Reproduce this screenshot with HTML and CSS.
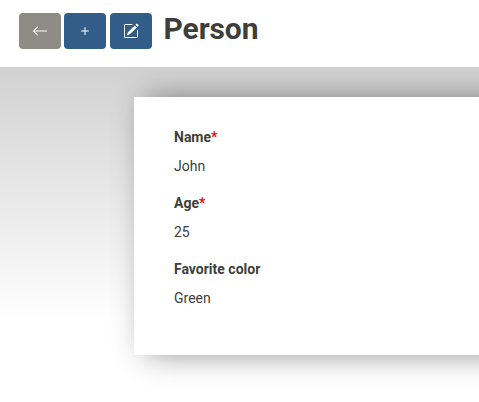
FILE: index.html
```html
<!DOCTYPE html>
<html lang="en">
<head>
<meta charset="utf-8">
<title>Person</title>
<link rel="stylesheet" href="styles.css">
</head>
<body>
<header class="toolbar">
  <button class="btn btn-back" aria-label="Back"><svg width="16" height="16" viewBox="0 0 16 16" fill="currentColor"><path fill-rule="evenodd" d="M15 8a.5.5 0 0 0-.5-.5H2.707l3.147-3.146a.5.5 0 1 0-.708-.708l-4 4a.5.5 0 0 0 0 .708l4 4a.5.5 0 0 0 .708-.708L2.707 8.5H14.5A.5.5 0 0 0 15 8z"/></svg></button>
  <button class="btn" aria-label="Add"><svg width="16" height="16" viewBox="0 0 16 16" fill="currentColor"><path d="M8 4a.5.5 0 0 1 .5.5v3h3a.5.5 0 0 1 0 1h-3v3a.5.5 0 0 1-1 0v-3h-3a.5.5 0 0 1 0-1h3v-3A.5.5 0 0 1 8 4z"/></svg></button>
  <button class="btn btn-edit" aria-label="Edit"><svg width="16" height="16" viewBox="0 0 16 16" fill="currentColor"><path d="M15.502 1.94a.5.5 0 0 1 0 .706L14.459 3.69l-2-2L13.502.646a.5.5 0 0 1 .707 0l1.293 1.293zm-1.75 2.456-2-2L4.939 9.21a.5.5 0 0 0-.121.196l-.805 2.414a.25.25 0 0 0 .316.316l2.414-.805a.5.5 0 0 0 .196-.12l6.813-6.814z"/><path fill-rule="evenodd" d="M1 13.5A1.5 1.5 0 0 0 2.500 15h11a1.500 1.500 0 0 0 1.500-1.500v-6a.5.5 0 0 0-1 0v6a.5.5 0 0 1-.5.5h-11a.5.5 0 0 1-.5-.5v-11a.5.5 0 0 1 .5-.5H9a.5.5 0 0 0 0-1H2.500A1.500 1.500 0 0 0 1 2.500v11z"/></svg></button>
  <h1 class="title">Person</h1>
</header>
<main class="content">
  <dl class="card">
    <dt class="label">Name<span class="required">*</span></dt>
    <dd class="value">John</dd>
    <dt class="label">Age<span class="required">*</span></dt>
    <dd class="value">25</dd>
    <dt class="label">Favorite color</dt>
    <dd class="value">Green</dd>
  </dl>
</main>
</body>
</html>
```
FILE: styles.css
```css
* { box-sizing: border-box; }
body {
  margin: 0;
  height: 402px;
  overflow: hidden;
  background: #fff;
  color: #3e3f3a;
  font: 14px/20px Roboto, sans-serif;
}
.toolbar {
  display: flex;
  align-items: flex-start;
  gap: 3px;
  height: 67px;
  padding: 13px 0 0 19px;
}
.btn {
  display: flex;
  align-items: center;
  justify-content: center;
  width: 42px;
  height: 36px;
  padding: 0;
  border: 0;
  border-radius: 4px;
  background: #325d88;
  color: #fff;
}
.btn-back { background: #8e8c84; }
.btn-edit { margin-left: 1px; }
.title {
  margin: -2px 0 0 8.5px;
  font-size: 30px;
  line-height: 36px;
  font-weight: 700;
  letter-spacing: -0.1px;
  color: #3e3f3a;
}
.content {
  height: 335px;
  padding: 30px 0 0 134px;
  overflow: hidden;
  background: linear-gradient(#d1d1d1, #fff 255px);
}
.card {
  width: 600px;
  height: 258px;
  margin: 0;
  padding: 30px 40px;
  background: #fff;
  box-shadow: 10px 0 30px -2px rgba(0, 0, 0, .47);
}
.label { font-weight: 700; }
.required { color: #f00; }
.value {
  margin: 9px 0 17px;
}
```
